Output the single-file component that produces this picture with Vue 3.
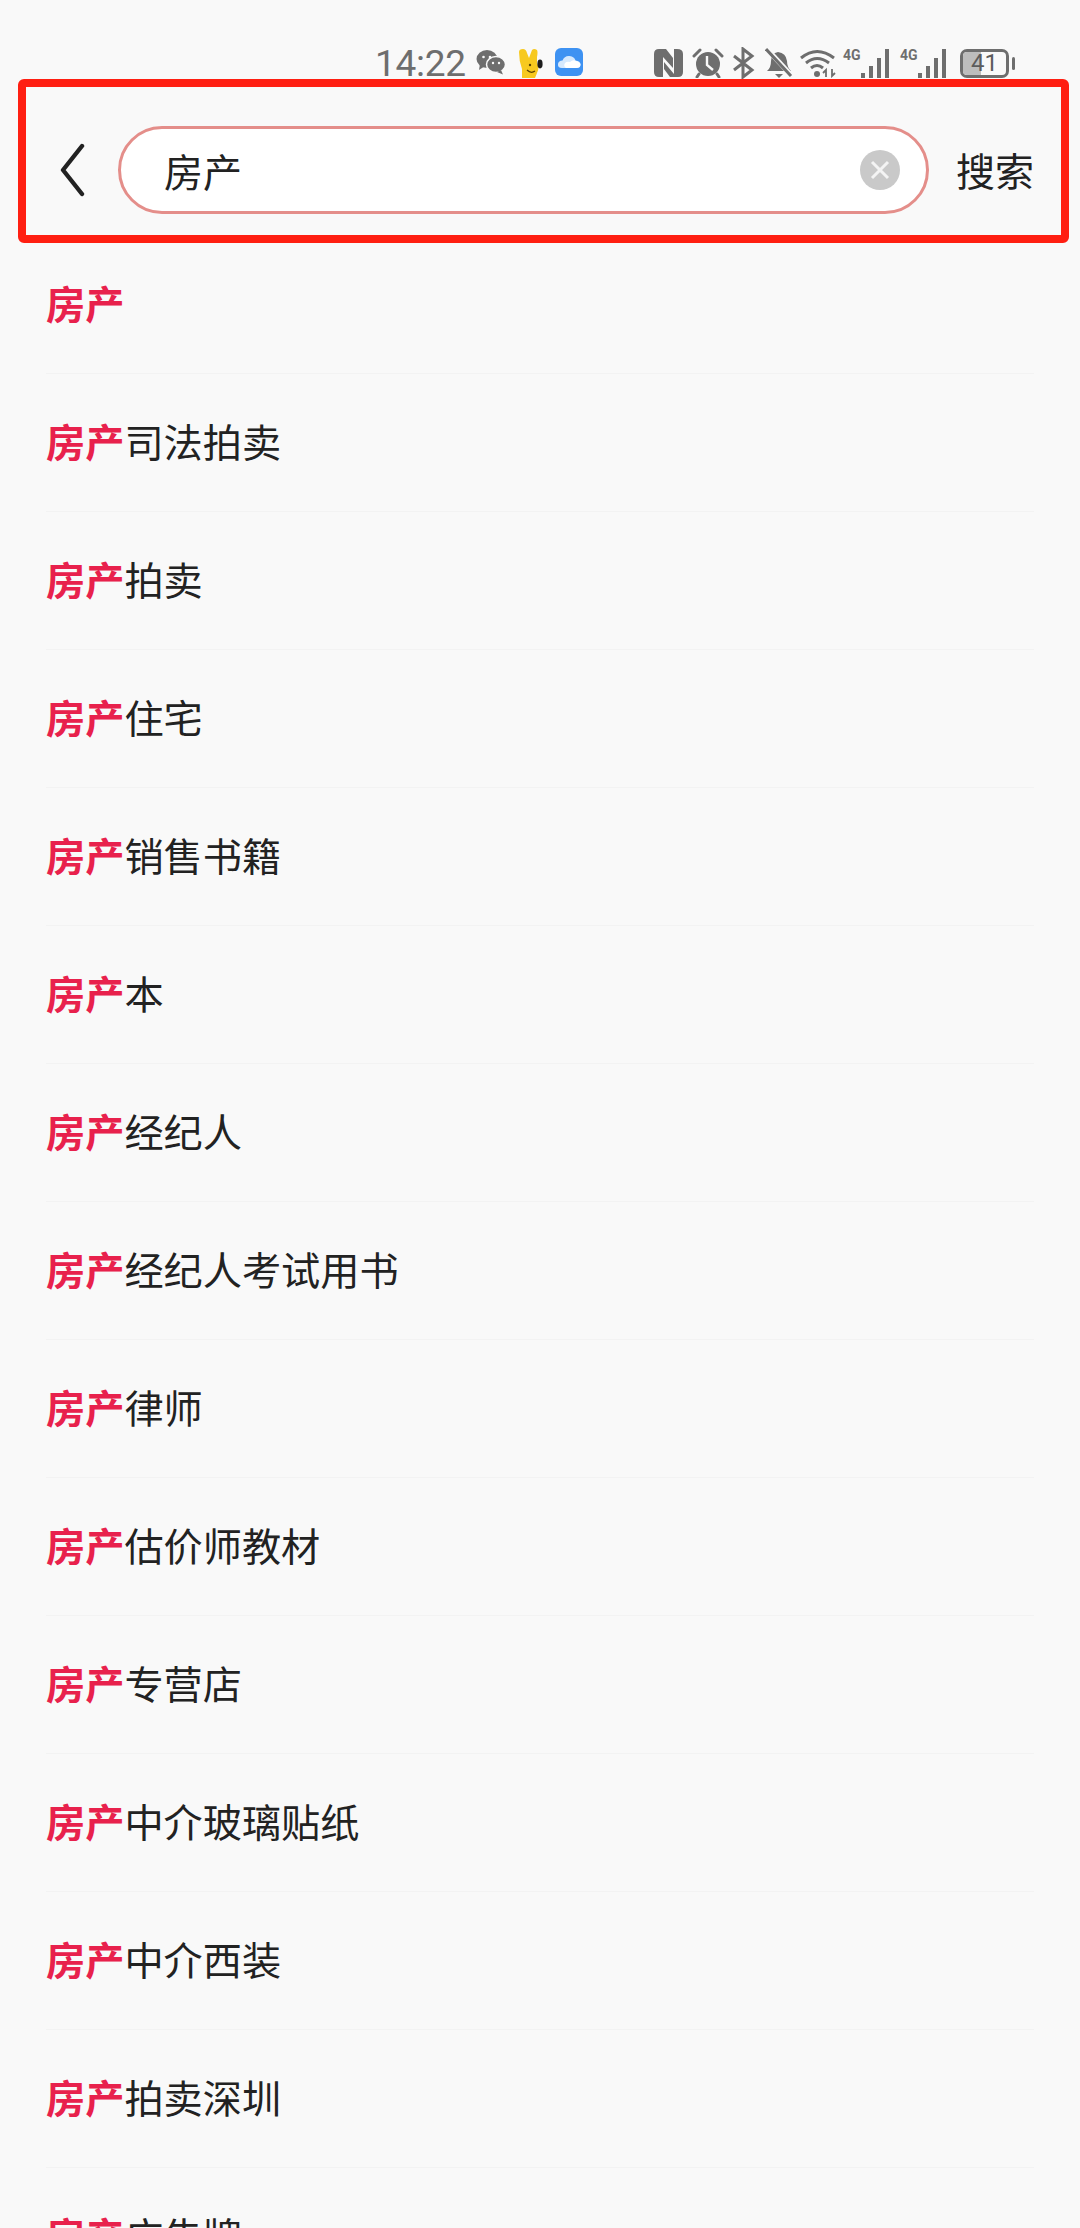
<template>
  <div class="page">
    <div class="status-bar">
      <div class="status-left">
        <span class="clock">14:22</span>
        <svg class="ic-wechat" viewBox="0 0 30 26">
          <ellipse cx="11" cy="10" rx="10.5" ry="9" fill="#6e6e6e" />
          <path d="M4 15 L3 21 L9 17 Z" fill="#6e6e6e" />
          <ellipse cx="20" cy="15.5" rx="9.5" ry="8" fill="#6e6e6e" stroke="#f9f9f9" stroke-width="1.5" />
          <path d="M25 21 L27 25.5 L21 23 Z" fill="#6e6e6e" />
          <circle cx="7.5" cy="8" r="1.3" fill="#f9f9f9" />
          <circle cx="14" cy="8" r="1.3" fill="#f9f9f9" />
          <circle cx="17" cy="14" r="1.2" fill="#f9f9f9" />
          <circle cx="23" cy="14" r="1.2" fill="#f9f9f9" />
        </svg>
        <svg class="ic-rabbit" viewBox="0 0 26 30">
          <path d="M1 3 Q1 0 5 0 Q8 0 9 4 L11 9 L14 1 Q16 -1 19 1 Q20 3 19 8 L19 14 Q22 18 19 24 L17 29 L4 29 L4 20 Q1 12 1 3 Z" fill="#f7c91f" />
          <ellipse cx="22" cy="15" rx="2.6" ry="4.4" fill="#1c1c1c" />
          <circle cx="12" cy="16" r="1.2" fill="#5a4200" />
          <path d="M9 21 Q13 25 17 22" fill="none" stroke="#5a4200" stroke-width="1.2" />
        </svg>
        <svg class="ic-cloud" viewBox="0 0 28 28">
          <rect x="0" y="0" width="28" height="28" rx="6" fill="#3e92f2" />
          <path d="M7 20 Q2.5 20 3 16 Q3.5 12.5 7.5 12.5 Q9.5 7.5 14.5 8 Q19.5 8.5 20.5 12.5 Q25.5 13 25.5 16.5 Q25.5 20 21 20 Z" fill="#d6e9fd" />
          <path d="M11 20 Q8 18 10 15 Q12 13 15 14 Q18 11 21 13 Q25 14 25.5 16.5 Q25.5 20 21 20 Z" fill="#fff" />
        </svg>
      </div>
      <div class="status-right">
        <svg class="ic-nfc" viewBox="0 0 29 28">
          <path d="M5 0 H12 L19 9 V19 L9 8 V28 H5 Q0 28 0 23 V5 Q0 0 5 0 Z" fill="#6e6e6e" />
          <path d="M23 0 Q29 0 29 5 V23 Q29 28 24 28 H16 L10 20 V13 L20 25 V0 Z" fill="#6e6e6e" />
        </svg>
        <svg class="ic-alarm" viewBox="0 0 32 30">
          <circle cx="16" cy="16" r="12" fill="#6e6e6e" />
          <path d="M15 8 V17 L21 22" fill="none" stroke="#f9f9f9" stroke-width="2.4" />
          <path d="M2 8 L8 2 M30 8 L24 2" stroke="#6e6e6e" stroke-width="3" stroke-linecap="round" />
          <path d="M7 26 L5 29 M25 26 L27 29" stroke="#6e6e6e" stroke-width="3" stroke-linecap="round" />
        </svg>
        <svg class="ic-bt" viewBox="0 0 24 32">
          <path d="M2 9 L20 23 L11 30 V2 L20 9 L2 23" fill="none" stroke="#6e6e6e" stroke-width="3" />
        </svg>
        <svg class="ic-bell" viewBox="0 0 28 30">
          <path d="M2 23 Q6 20 6 13 Q6 5 13 4 Q21 5 22 13 Q22 19 26 23 Z" fill="#6e6e6e" />
          <path d="M10 26 H18 L14 30 Z" fill="#6e6e6e" />
          <path d="M2 1 L27 28" stroke="#f9f9f9" stroke-width="5" />
          <path d="M1 1 L26 28" stroke="#6e6e6e" stroke-width="3" />
        </svg>
        <svg class="ic-wifi" viewBox="0 0 36 30">
          <path d="M1 10 Q17 -3 34 10" fill="none" stroke="#6e6e6e" stroke-width="3" />
          <path d="M6 15 Q17 6 29 15" fill="none" stroke="#6e6e6e" stroke-width="3" />
          <path d="M11 20 Q17 15 23 20" fill="none" stroke="#6e6e6e" stroke-width="3" />
          <circle cx="17" cy="26" r="3" fill="#6e6e6e" />
          <path d="M26 29 V22 L23 25 M32 21 V28 L35 25" fill="none" stroke="#6e6e6e" stroke-width="1.8" />
        </svg>
        <div class="net">
          <span class="net-label">4G</span>
          <svg class="ic-signal" viewBox="0 0 30 30">
            <rect x="0" y="25" width="4" height="5" fill="#6e6e6e" />
            <rect x="8" y="18" width="4" height="12" fill="#6e6e6e" />
            <rect x="16" y="10" width="4" height="20" fill="#6e6e6e" />
            <rect x="24" y="1" width="4" height="29" fill="#6e6e6e" />
          </svg>
        </div>
        <div class="net">
          <span class="net-label">4G</span>
          <svg class="ic-signal" viewBox="0 0 30 30">
            <rect x="0" y="25" width="4" height="5" fill="#6e6e6e" />
            <rect x="8" y="18" width="4" height="12" fill="#6e6e6e" />
            <rect x="16" y="10" width="4" height="20" fill="#6e6e6e" />
            <rect x="24" y="1" width="4" height="29" fill="#6e6e6e" />
          </svg>
        </div>
        <div class="battery">
          <div class="battery-body">
            <div class="battery-fill" :style="{ width: level + '%' }"></div>
            <span class="battery-text">{{ level }}</span>
          </div>
          <div class="battery-nub"></div>
        </div>
      </div>
    </div>

    <div class="search-head">
      <svg class="back" viewBox="0 0 26 54">
        <path d="M23 3 L4 27 L23 51" fill="none" stroke="#222" stroke-width="4.4" stroke-linecap="round" stroke-linejoin="round" />
      </svg>
      <div class="search-box">
        <span class="search-text">房产</span>
        <svg class="clear" viewBox="0 0 40 40">
          <circle cx="20" cy="20" r="20" fill="#c9c9c9" />
          <path d="M12 12 L28 28 M28 12 L12 28" stroke="#f4f4f4" stroke-width="3" />
        </svg>
      </div>
      <span class="search-btn">搜索</span>
    </div>
    <div class="mark"></div>

    <ul class="list">
      <li v-for="item in items" :key="item" class="row">
        <b class="hit">房产</b><span>{{ item }}</span>
      </li>
    </ul>
  </div>
</template>

<script setup>
const level = 41
const items = [
  '',
  '司法拍卖',
  '拍卖',
  '住宅',
  '销售书籍',
  '本',
  '经纪人',
  '经纪人考试用书',
  '律师',
  '估价师教材',
  '专营店',
  '中介玻璃贴纸',
  '中介西装',
  '拍卖深圳',
  '广告牌'
]
</script>

<style>
html,
body {
  margin: 0;
  background: #f9f9f9;
}
</style>

<style scoped>
.page {
  position: relative;
  width: 1080px;
  height: 2228px;
  overflow: hidden;
  background: #f9f9f9;
  font-family: "Noto Sans CJK SC", "Noto Sans", sans-serif;
  color: #222;
}

.status-bar {
  height: 80px;
  box-sizing: border-box;
  padding: 48px 65px 0 375px;
  display: flex;
  justify-content: space-between;
  align-items: flex-start;
  color: #6e6e6e;
}

.status-left,
.status-right {
  display: flex;
  align-items: flex-start;
}

.clock {
  width: 90px;
  height: 30px;
  margin-top: 1px;
  font: 37px/30px Roboto, sans-serif;
  letter-spacing: -0.3px;
  white-space: nowrap;
}

.ic-wechat { width: 30px; height: 26px; margin: 1px 0 0 11px; }
.ic-rabbit { width: 26px; height: 30px; margin: 1px 0 0 12px; }
.ic-cloud { width: 28px; height: 28px; margin-left: 11px; }

.ic-nfc { width: 29px; height: 28px; margin-top: 1px; }
.ic-alarm { width: 32px; height: 30px; margin: 0 0 0 9px; }
.ic-bt { width: 24px; height: 32px; margin: -1px 0 0 8px; }
.ic-bell { width: 28px; height: 30px; margin-left: 9px; }
.ic-wifi { width: 36px; height: 30px; margin-left: 7px; }

.net {
  display: flex;
  align-items: flex-start;
  margin-left: 7px;
}

.net + .net {
  margin-left: 9px;
}

.net-label {
  width: 18px;
  font: 700 14px/14px Roboto, sans-serif;
}

.ic-signal { width: 30px; height: 30px; }

.battery {
  display: flex;
  align-items: center;
  height: 30px;
  margin-left: 12px;
}

.battery-body {
  position: relative;
  width: 49px;
  height: 29px;
  box-sizing: border-box;
  border: 3px solid #6e6e6e;
  border-radius: 7px;
  overflow: hidden;
}

.battery-fill {
  height: 100%;
  background: #bdbdbd;
}

.battery-text {
  position: absolute;
  left: 8px;
  top: 0;
  font: 24px/23px Roboto, sans-serif;
  color: #5c5c5c;
}

.battery-nub {
  width: 3px;
  height: 13px;
  margin-left: 3px;
  border-radius: 2px;
  background: #6e6e6e;
}

.search-head {
  height: 156px;
  box-sizing: border-box;
  padding: 46px 42px 20px 59px;
  display: flex;
  align-items: flex-start;
}

.back {
  width: 26px;
  height: 54px;
  margin: 17px 33px 0 0;
  flex: none;
}

.search-box {
  width: 811px;
  height: 88px;
  box-sizing: border-box;
  border: 3px solid #e48e8a;
  border-radius: 44px;
  background: #fff;
  padding: 0 26px 0 43px;
  display: flex;
  align-items: center;
  justify-content: space-between;
  flex: none;
}

.search-text {
  font-size: 39px;
  color: #222;
}

.clear {
  width: 40px;
  height: 40px;
}

.search-btn {
  margin: 15px 0 0 27px;
  font-size: 39px;
  line-height: 56px;
  white-space: nowrap;
  color: #222;
}

.mark {
  position: absolute;
  left: 18px;
  top: 79px;
  width: 1051px;
  height: 164px;
  box-sizing: border-box;
  border: 8px solid #ff1f12;
  border-radius: 6px;
  pointer-events: none;
}

.list {
  list-style: none;
  margin: 0;
  padding: 0 46px;
}

.row {
  height: 138px;
  box-sizing: border-box;
  padding-bottom: 6px;
  border-bottom: 1px solid #f3f3f3;
  display: flex;
  align-items: center;
  font-size: 39.2px;
  white-space: nowrap;
  color: #222;
}

.hit {
  font-weight: 700;
  color: #e8214c;
}
</style>
